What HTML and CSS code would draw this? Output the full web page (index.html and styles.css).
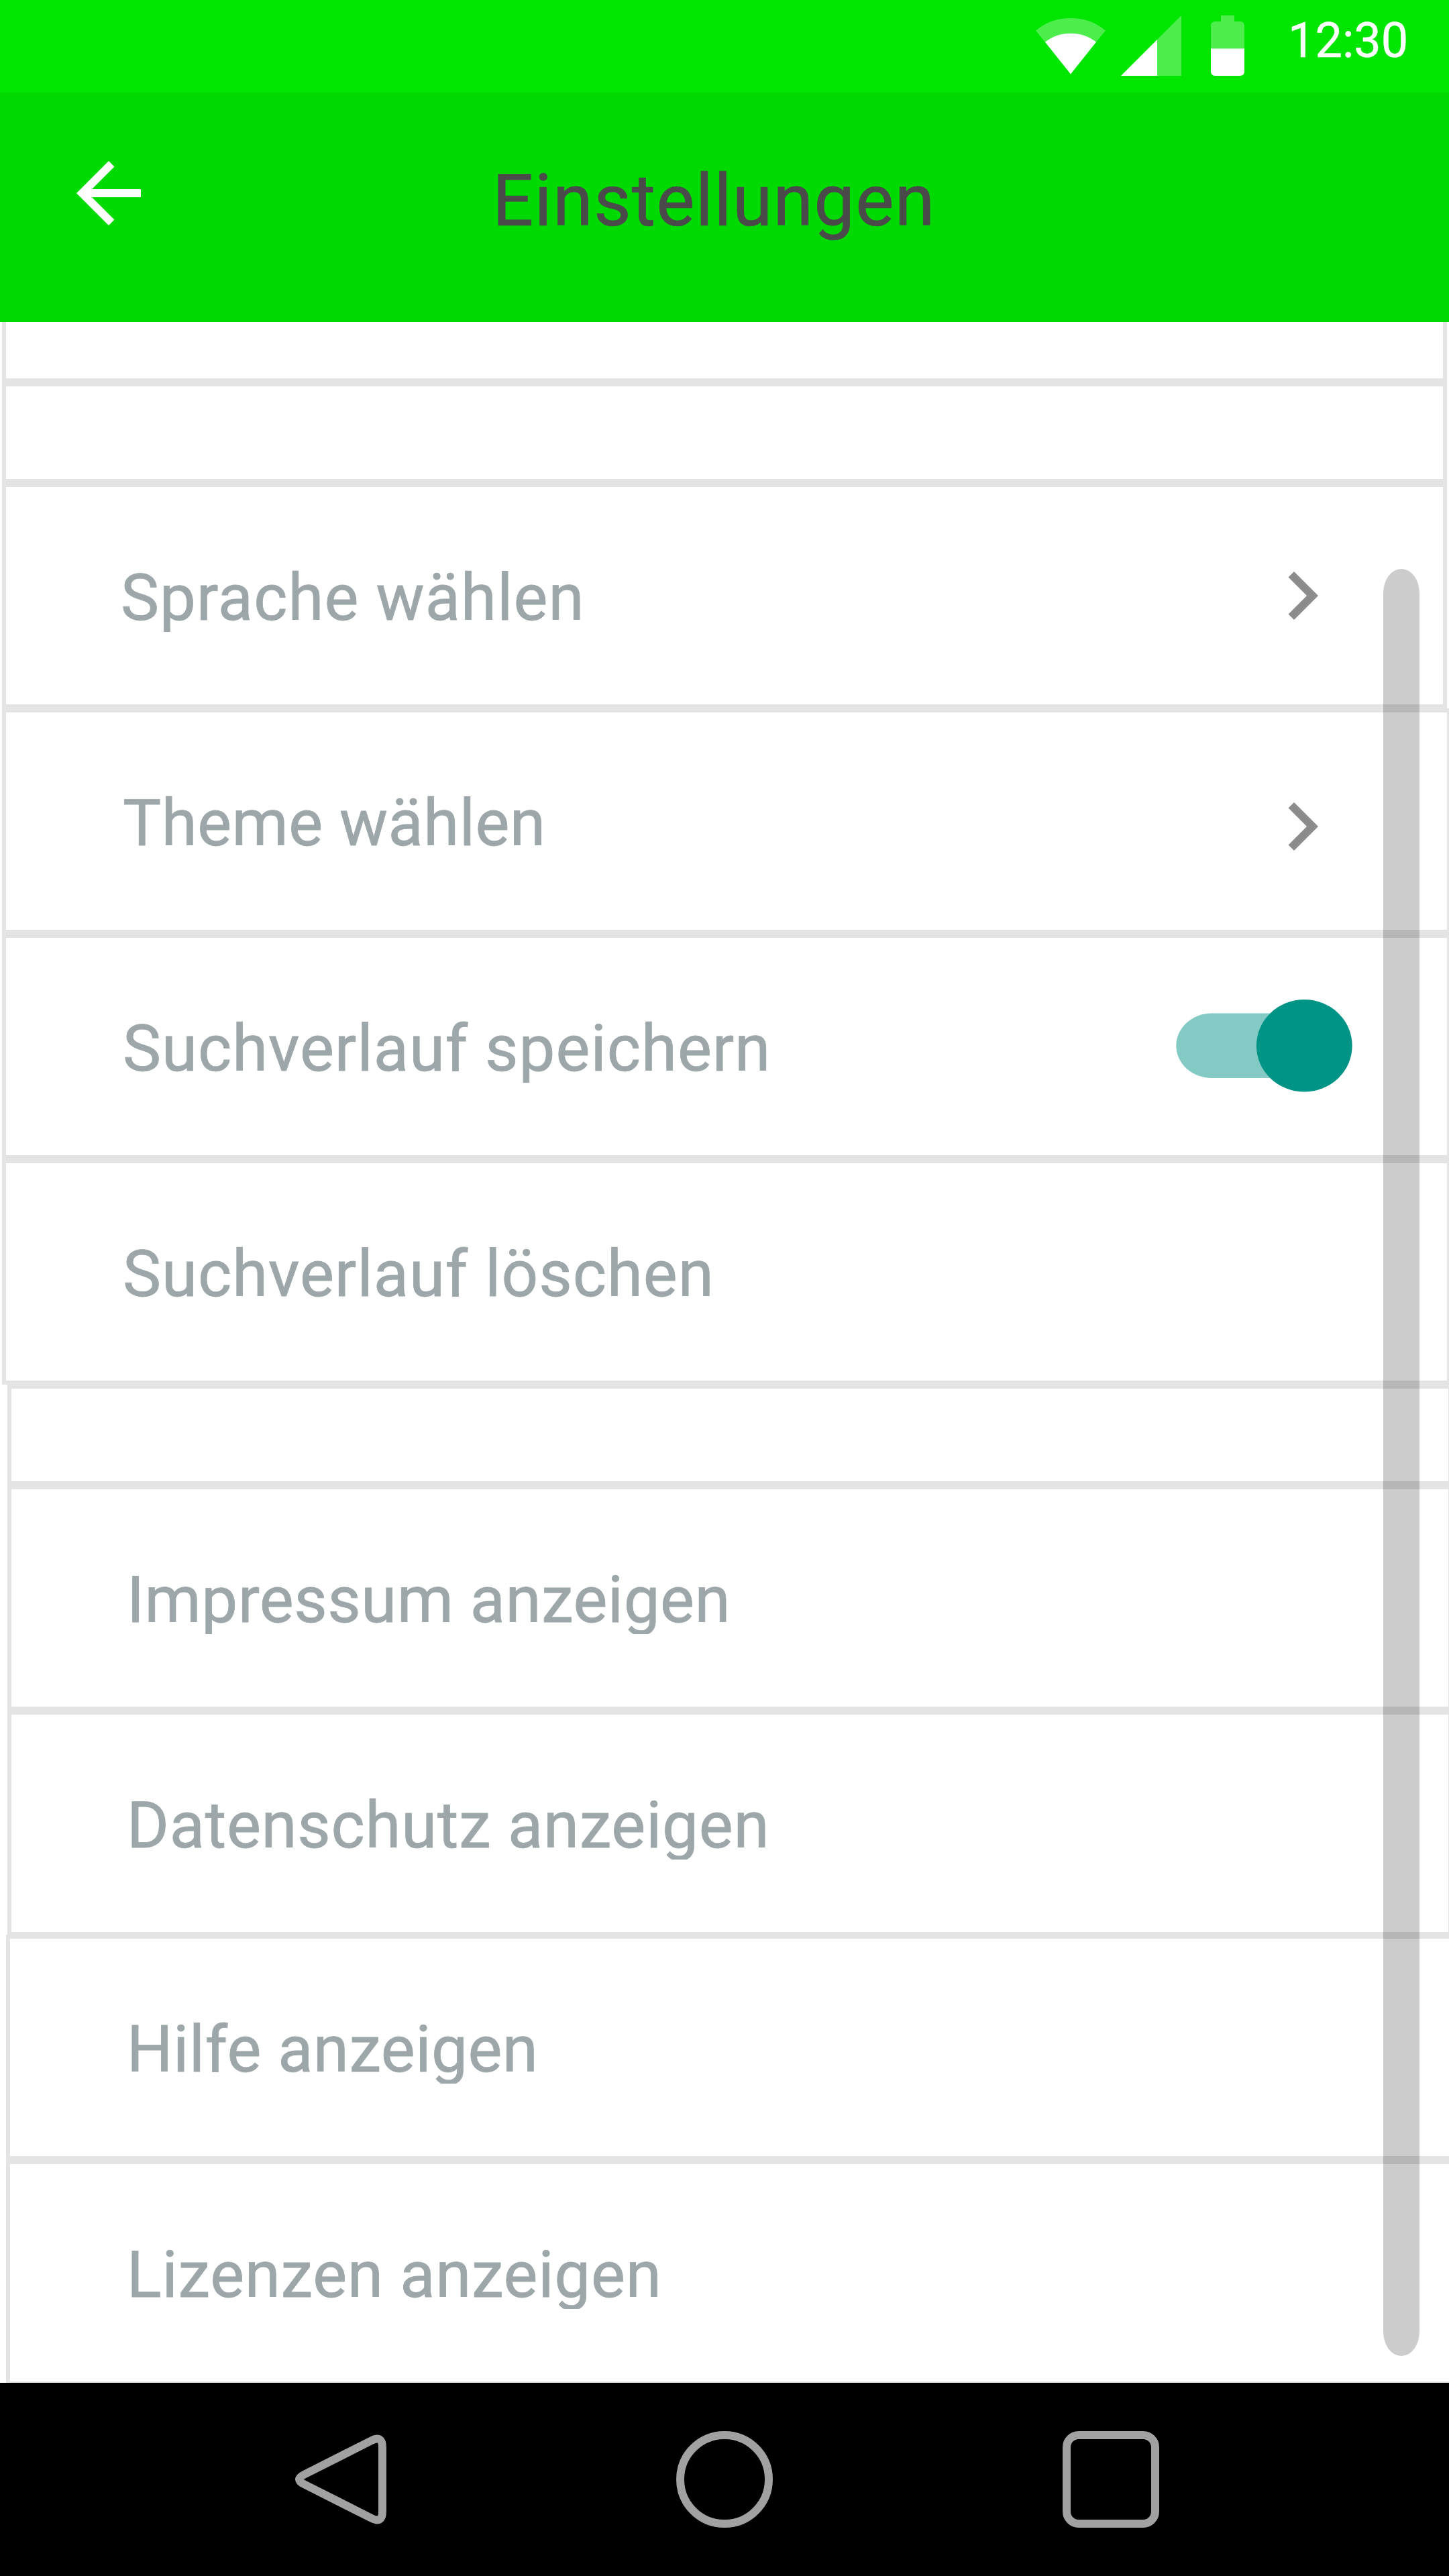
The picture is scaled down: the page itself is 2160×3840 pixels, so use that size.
FILE: index.html
```html
<!DOCTYPE html>
<html lang="de">
<head>
<meta charset="utf-8">
<title>Einstellungen</title>
<link rel="stylesheet" href="styles.css">
</head>
<body>
<div class="screen">
  <div class="status-bar">
    <svg class="status-icons" viewBox="1540 0 320 138">
      <path class="dim" d="M1596 110.5 1544 45.5Q1566 27 1596 27T1648 45.5L1634 62.7Q1618 49.7 1596 49.7T1558 62.7Z"/>
      <path class="lit" d="M1596 110.5 1558 62.7Q1574 49.7 1596 49.7T1634 62.7Z"/>
      <path class="dim" d="M1725 59V113H1761V23L1725 59Z"/>
      <path class="lit" d="M1671 113 1725 59V113Z"/>
      <path class="dim" d="M1805 73V38.500Q1805 32 1811.500 32H1820V23H1840V32H1848.500Q1855 32 1855 38.500V73Z"/>
      <path class="lit" d="M1805 72.500H1855V106.500Q1855 113 1848.500 113H1811.500Q1805 113 1805 106.500Z"/>
    </svg>
    <span class="clock">12:30</span>
  </div>
  <header class="app-bar">
    <svg class="back" viewBox="0 0 24 24"><path d="M20 11H7.830l5.590-5.590L12 4l-8 8 8 8 1.410-1.410L7.830 13H20z"/></svg>
    <h1 class="title">Einstellungen</h1>
  </header>
  <main class="list">
    <div class="row row-cut"></div>
    <div class="row row-gap"></div>
    <div class="row"><span class="label label-first">Sprache wählen</span><svg class="chevron" viewBox="0 0 24 24"><path d="M10 6L8.590 7.410 13.170 12l-4.580 4.590L10 18l6-6z"/></svg></div>
    <div class="row row-wide"><span class="label label-tight">Theme wählen</span><svg class="chevron chevron-low" viewBox="0 0 24 24"><path d="M10 6L8.590 7.410 13.170 12l-4.580 4.590L10 18l6-6z"/></svg></div>
    <div class="row row-wide"><span class="label">Suchverlauf speichern</span><svg class="toggle" viewBox="0 0 264 140"><rect class="track" x="0.300" y="21.600" width="240" height="96.400" rx="53" ry="48.200"/><ellipse class="thumb" cx="191.300" cy="69.800" rx="71.400" ry="68.800"/></svg></div>
    <div class="row row-wide"><span class="label">Suchverlauf löschen</span></div>
    <div class="row row-gap row-inset"></div>
    <div class="row row-inset"><span class="label label-near label-tight">Impressum anzeigen</span></div>
    <div class="row row-inset"><span class="label label-near label-snug">Datenschutz anzeigen</span></div>
    <div class="row row-wide row-shift row-overlap"><span class="label label-tight">Hilfe anzeigen</span></div>
    <div class="row row-wide row-shift"><span class="label label-snug">Lizenzen anzeigen</span></div>
    <div class="scrollbar"></div>
  </main>
  <nav class="nav-bar">
    <svg viewBox="0 0 144 144"><path d="M21 65L122 14Q138 6 138 24V120Q138 138 122 130L21 79Q7 72 21 65Z"/></svg>
    <svg viewBox="0 0 144 144"><circle cx="72" cy="72" r="66"/></svg>
    <svg viewBox="0 0 144 144"><rect x="6" y="6" width="132" height="132" rx="18"/></svg>
  </nav>
</div>
</body>
</html>
```
FILE: styles.css
```css
* { box-sizing: border-box; }
body { margin: 0; font-family: Roboto, sans-serif; }
.screen {
  display: flex;
  flex-direction: column;
  width: 2160px;
  height: 3840px;
  overflow: hidden;
  background: #fff;
}
svg { display: block; flex: none; }

.status-bar {
  display: flex;
  height: 138px;
  padding-left: 1540px;
  background: #00e600;
}
.status-icons { width: 320px; height: 138px; }
.dim { fill: #fff; fill-opacity: .3; }
.lit { fill: #fff; }
.clock {
  margin-left: 60px;
  padding-top: 19px;
  font-size: 72px;
  line-height: 84px;
  color: #fff;
  -webkit-text-stroke: .5px currentColor;
}

.app-bar {
  display: flex;
  height: 342px;
  padding-left: 90px;
  background: #00da00;
}
.back { width: 144px; height: 144px; margin-top: 78px; fill: #fff; }
.title {
  margin: 97px 0 0 500px;
  font-size: 108px;
  font-weight: 400;
  line-height: 128px;
  letter-spacing: 1.2px;
  color: #4a4a4a;
  -webkit-text-stroke: .7px currentColor;
}

.list {
  position: relative;
  flex: none;
  height: 3072px;
  overflow: hidden;
}
.row {
  display: flex;
  width: 2154px;
  height: 336px;
  margin-left: 3px;
  border: 6px solid #e4e4e4;
}
.row-cut { height: 90px; border-top: 0; }
.row-cut + .row-gap { margin-top: 0; }
.row-gap { height: 150px; }
.row-wide { width: 2160px; }
.row-inset { margin-left: 11px; }
.row-shift { margin-left: 9px; }
.row-overlap { margin-top: -2px; }
.label {
  width: 1400px;
  height: 102px;
  margin: 114px 0 0 171px;
  padding-left: 3px;
  overflow: hidden;
  font-size: 96px;
  line-height: 102px;
  letter-spacing: 1px;
  white-space: nowrap;
  color: #9da7a9;
  -webkit-text-stroke: .8px currentColor;
}
.label-first { padding-left: 0; letter-spacing: 1.1px; }
.label-near { padding-left: 1px; }
.label-tight { letter-spacing: .5px; }
.label-snug { letter-spacing: .75px; }
.chevron { width: 144px; height: 144px; margin: 89.5px 0 0 289px; fill: #8c8c8c; }
.chevron-low { margin-top: 97.5px; }
.toggle { width: 264px; height: 140px; margin: 91px 0 0 173px; }
.track { fill: #82cac3; }
.thumb { fill: #009486; }
.scrollbar {
  position: absolute;
  top: 368px;
  left: 2062px;
  width: 54px;
  height: 2664px;
  border-radius: 27px / 36px;
  background: rgba(0, 0, 0, .2);
}

.nav-bar {
  display: flex;
  flex: none;
  gap: 432px;
  height: 288px;
  padding: 72px 0 0 432px;
  background: #000;
}
.nav-bar svg { width: 144px; height: 144px; fill: none; stroke: #a1a1a1; stroke-width: 12; }
```
